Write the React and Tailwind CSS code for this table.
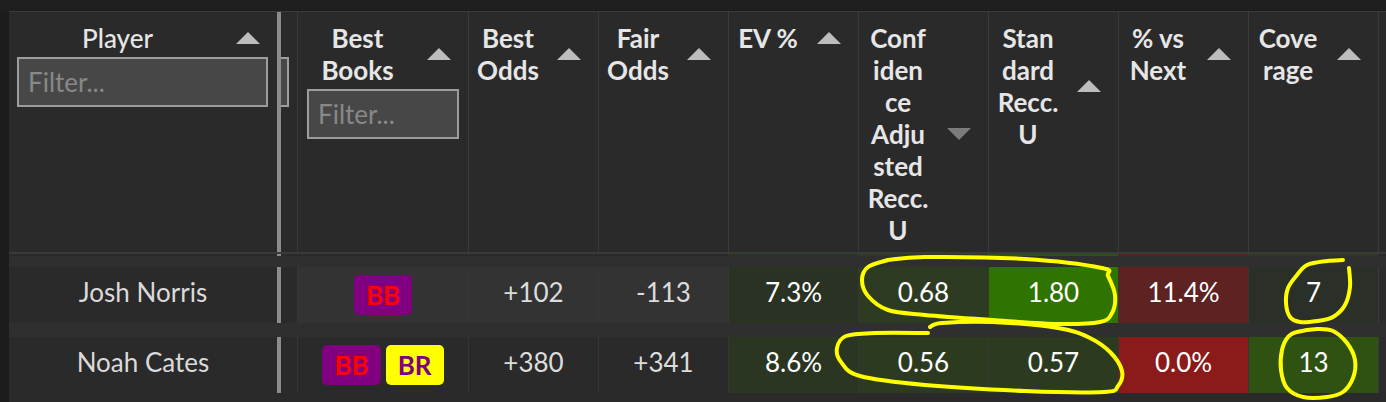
import React from "react";

function smooth(pts, closed) {
  const p = closed ? [pts[pts.length - 1], ...pts, pts[0], pts[1]] : [pts[0], ...pts, pts[pts.length - 1]];
  let d = `M${p[1][0]},${p[1][1]}`;
  for (let i = 1; i < p.length - 2; i++) {
    const [x0, y0] = p[i - 1];
    const [x1, y1] = p[i];
    const [x2, y2] = p[i + 1];
    const [x3, y3] = p[i + 2];
    const c1x = x1 + (x2 - x0) / 6;
    const c1y = y1 + (y2 - y0) / 6;
    const c2x = x2 - (x3 - x1) / 6;
    const c2y = y2 - (y3 - y1) / 6;
    d += ` C${c1x.toFixed(1)},${c1y.toFixed(1)} ${c2x.toFixed(1)},${c2y.toFixed(1)} ${x2},${y2}`;
  }
  return d;
}

const loop1 = [
  [888, 260], [925, 257], [1025, 259], [1102, 268], [1108, 276], [1115, 295], [1112, 313],
  [1100, 322], [1058, 324], [992, 320], [925, 315], [888, 310], [868, 296], [862, 280], [868, 267], [888, 260],
];
const loop2 = [
  [928, 333], [875, 333], [846, 336], [837, 348], [841, 362], [860, 376], [925, 385], [1025, 391],
  [1104, 392], [1118, 386], [1122, 371], [1111, 353], [1090, 338], [1058, 328], [992, 322], [942, 323], [930, 327],
];
const loop3 = [
  [1349, 268], [1350, 287], [1345, 305], [1333, 317], [1317, 321], [1300, 322], [1290, 317],
  [1286, 303], [1288, 288], [1297, 275], [1307, 265], [1327, 261], [1343, 260],
];
const loop4 = [
  [1297, 332], [1317, 329], [1333, 331], [1347, 343], [1355, 360], [1353, 378], [1343, 392],
  [1327, 397], [1303, 397], [1287, 388], [1281, 370], [1282, 350], [1288, 337],
];

function Arrow({ down }) {
  return (
    <svg width="24" height="12" viewBox="0 0 24 12" className="shrink-0">
      {down ? (
        <polygon points="0,0 24,0 12,12" fill="#7c7c7c" />
      ) : (
        <polygon points="0,12 12,0 24,12" fill="#bdbdbd" />
      )}
    </svg>
  );
}

function Filter({ className }) {
  return (
    <input
      readOnly
      placeholder="Filter..."
      className={`mt-[3px] h-[50px] border-2 border-[#9d9d9d] bg-[#474747] pl-[9px] text-[26px] text-[#ddd] outline-none placeholder:text-[#888] ${className}`}
    />
  );
}

function Head({ label, w, down, filter, bold = true, border = true }) {
  return (
    <div className={`flex flex-col pt-[10px] ${border ? "border-l border-[#3a3a3a]" : ""}`}>
      <div className="flex items-center pl-[8px] pr-[17px] gap-[18px]">
        <div
          className={`${w} text-center break-words text-[26px] leading-[32px] text-[#e6e6e6] [font-variant-ligatures:none] ${
            bold ? "font-bold" : "font-medium"
          }`}
        >
          {label}
        </div>
        <Arrow down={down} />
      </div>
      {filter}
    </div>
  );
}

function Badge({ text, bg, fg }) {
  return (
    <span className={`inline-flex h-[40px] items-center rounded-[5px] px-[12px] text-[26px] font-bold ${bg} ${fg}`}>
      {text}
    </span>
  );
}

function Cell({ children, bg, white }) {
  return (
    <div
      className={`flex items-center justify-center border-l border-[#363636] pb-[5px] text-[26px] ${bg} ${
        white ? "text-white" : "text-[#dcdcdc]"
      }`}
    >
      {children}
    </div>
  );
}

const COLS = "grid grid-cols-[268px_4px_16px_171px_repeat(7,130px)_8px]";

function Row({ player, rowBg, books, cells }) {
  return (
    <div className={`${COLS} h-[56px]`}>
      <div className="flex items-center justify-center pb-[5px] text-[26px] text-[#dadada] bg-[#2a2a2a]">{player}</div>
      <div className="bg-[#8c8c8c]" />
      <div className="bg-[#2a2a2a]" />
      <div className={`flex items-center justify-center gap-[5px] border-l border-[#363636] ${rowBg}`}>{books}</div>
      {cells.map((c, i) => (
        <Cell key={i} bg={c.bg} white={c.white}>
          {c.v}
        </Cell>
      ))}
      <div className="border-l border-[#3a3a3a] bg-[#2c2c2c]" />
    </div>
  );
}

export default function App() {
  return (
    <div className="relative h-[402px] w-[1386px] overflow-hidden bg-[#1e1e1e] font-['Lato','Liberation_Sans',sans-serif]">
      <div className="h-[11px]" />
      <div className="flex h-[391px]">
        <div className="w-[9px] shrink-0 bg-[#1c1c1c]" />
        <div className="flex w-[1377px] flex-col bg-[#2f2f2f]">
          {/* header */}
          <div className={`${COLS} h-[243px] border-t border-b-2 border-[#3a3a3a] bg-[#2a2a2a]`}>
            <Head label="Player" w="w-[201px]" bold={false} border={false} filter={<Filter className="ml-[8px] w-[251px]" />} />
            <div className="bg-[#8c8c8c]" />
            <div className="pt-[45px]">
              <div className="h-[50px] w-[8px] border-2 border-l-0 border-[#9d9d9d] bg-[#474747]" />
            </div>
            <Head label="Best Books" w="w-[103px]" filter={<Filter className="ml-[9px] w-[152px]" />} />
            <Head label="Best Odds" w="w-[62px]" />
            <Head label="Fair Odds" w="w-[62px]" />
            <Head label="EV %" w="w-[62px]" />
            <Head label="Confidence Adjusted Recc. U" w="w-[62px]" down />
            <Head label="Standard Recc. U" w="w-[62px]" />
            <Head label="% vs Next" w="w-[62px]" />
            <Head label="Coverage" w="w-[62px]" />
            <div className="border-l border-[#3a3a3a]" />
          </div>
          {/* thin strip of previous row */}
          <div className={`${COLS} h-[2px]`}>
            <div className="bg-[#2a2a2a]" />
            <div className="bg-[#8c8c8c]" />
            <div className="bg-[#2a2a2a]" />
            <div className="bg-[#2a2a2a]" />
            <div className="bg-[#2a2a2a]" />
            <div className="bg-[#2a2a2a]" />
            <div className="bg-[#2b3424]" />
            <div className="bg-[#2d3b22]" />
            <div className="bg-[#2c5512]" />
            <div className="bg-[#5a1f1f]" />
            <div className="bg-[#2d3b22]" />
            <div className="bg-[#2a2a2a]" />
          </div>
          <div className="h-[11px]" />
          <Row
            player="Josh Norris"
            rowBg="bg-[#333333]"
            books={<Badge text="BB" bg="bg-[#800080]" fg="text-[#ff0000]" />}
            cells={[
              { v: "+102", bg: "bg-[#333333]" },
              { v: "-113", bg: "bg-[#333333]" },
              { v: "7.3%", bg: "bg-[#293223]", white: true },
              { v: "0.68", bg: "bg-[#2d3b22]", white: true },
              { v: "1.80", bg: "bg-[#2f7300]", white: true },
              { v: "11.4%", bg: "bg-[#5e2222]", white: true },
              { v: "7", bg: "bg-[#2a2f27]", white: true },
            ]}
          />
          <div className="h-[14px]" />
          <Row
            player="Noah Cates"
            rowBg="bg-[#2a2a2a]"
            books={
              <>
                <Badge text="BB" bg="bg-[#800080]" fg="text-[#ff0000]" />
                <Badge text="BR" bg="bg-[#ffff00]" fg="text-[#800080]" />
              </>
            }
            cells={[
              { v: "+380", bg: "bg-[#2a2a2a]" },
              { v: "+341", bg: "bg-[#2a2a2a]" },
              { v: "8.6%", bg: "bg-[#2b3622]", white: true },
              { v: "0.56", bg: "bg-[#2c3b20]", white: true },
              { v: "0.57", bg: "bg-[#2c3b20]", white: true },
              { v: "0.0%", bg: "bg-[#8b1a1a]", white: true },
              { v: "13", bg: "bg-[#2f5212]", white: true },
            ]}
          />
          <div className="flex-1 bg-[#2a2a2a]" />
        </div>
      </div>
      <svg
        className="pointer-events-none absolute left-0 top-0"
        width="1386"
        height="402"
        viewBox="0 0 1386 402"
        fill="none"
        stroke="#ffff00"
        strokeWidth="4"
        strokeLinecap="round"
        strokeLinejoin="round"
      >
        <path d={smooth(loop1, false)} />
        <path d={smooth(loop2, false)} />
        <path d={smooth(loop3, false)} />
        <path d={smooth(loop4, true)} />
      </svg>
    </div>
  );
}
